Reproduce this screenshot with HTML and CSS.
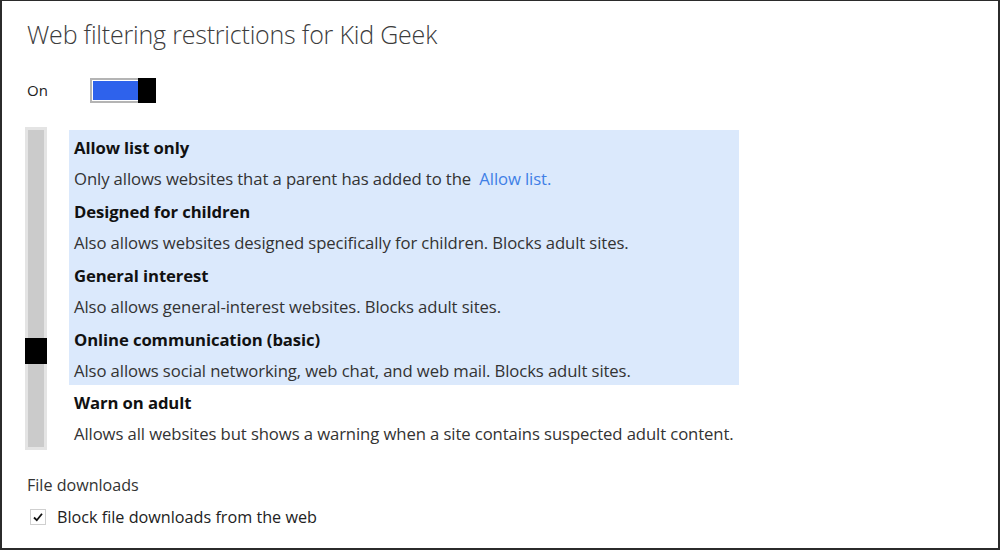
FILE: index.html
```html
<!DOCTYPE html>
<html lang="en">
<head>
	<meta charset="UTF-8">
	<title>Web filtering</title>
	<link rel="stylesheet" href="styles.css">
</head>
<body>
	<div class="frame">
		<h1 class="title">Web filtering restrictions for Kid Geek</h1>
		<div class="onoff">
			<span class="onoff-label">On</span>
			<div class="toggle"><div class="toggle-fill"></div><div class="toggle-thumb"></div></div>
		</div>
		<div class="levels">
			<div class="slider">
				<div class="slider-track"></div>
				<div class="slider-thumb"></div>
			</div>
			<div class="options">
				<div class="selected">
					<div class="opt">
						<div class="opt-name">Allow list only</div>
						<div class="opt-desc">Only allows websites that a parent has added to the <a href="javascript:;" class="link">Allow list.</a></div>
					</div>
					<div class="opt">
						<div class="opt-name">Designed for children</div>
						<div class="opt-desc">Also allows websites designed specifically for children. Blocks adult sites.</div>
					</div>
					<div class="opt">
						<div class="opt-name">General interest</div>
						<div class="opt-desc">Also allows general-interest websites. Blocks adult sites.</div>
					</div>
					<div class="opt">
						<div class="opt-name">Online communication (basic)</div>
						<div class="opt-desc">Also allows social networking, web chat, and web mail. Blocks adult sites.</div>
					</div>
				</div>
				<div class="opt">
					<div class="opt-name">Warn on adult</div>
					<div class="opt-desc">Allows all websites but shows a warning when a site contains suspected adult content.</div>
				</div>
			</div>
		</div>
		<div class="downloads">
			<div class="downloads-title">File downloads</div>
			<label class="check">
				<span class="box">
					<svg width="12" height="12" viewBox="0 0 12 12"><path d="M2 6.5 L4.8 9.2 L10 2.8" fill="none" stroke="#111" stroke-width="1.8"/></svg>
				</span>
				Block file downloads from the web
			</label>
		</div>
	</div>
</body>
</html>
```

FILE: styles.css
```css
html, body {
	margin: 0;
	padding: 0;
}
body {
	width: 1000px;
	height: 550px;
	background: #fff;
	font-family: "Open Sans", "Noto Sans", sans-serif;
	color: #333;
}
.frame {
	box-sizing: border-box;
	width: 1000px;
	height: 550px;
	border: 2px solid #2b2b2b;
	border-top-width: 1px;
	padding: 16px 0 0 25px;
	overflow: hidden;
}
.title {
	margin: 0;
	font-weight: 300;
	font-size: 25px;
	line-height: 34px;
	color: #3c3c3c;
	letter-spacing: -0.2px;
}
.onoff {
	display: flex;
	align-items: center;
	margin-top: 27px;
	height: 24px;
}
.onoff-label {
	font-size: 15px;
	width: 63px;
	color: #222;
}
.toggle {
	display: flex;
	box-sizing: border-box;
	width: 66px;
	height: 25px;
	border: 2px solid #b4b4b4;
	background: #fff;
	padding: 1px 0 1px 1px;
}
.toggle-fill {
	flex: 1;
	background: #2e62ec;
}
.toggle-thumb {
	width: 18px;
	margin: -3px -2px -3px 0;
	background: #000;
}
.levels {
	display: flex;
	margin-top: 25px;
}
.slider {
	position: relative;
	width: 22px;
	height: 323px;
	margin-left: -2px;
	box-sizing: border-box;
	border: 3px solid #e4e4e4;
	background: #cbcbcb;
}
.slider-thumb {
	position: absolute;
	left: -3px;
	right: -3px;
	top: 208px;
	height: 26px;
	background: #000;
}
.options {
	margin-left: 22px;
	margin-top: 3px;
}
.selected {
	width: 670px;
	height: 255px;
	background: #dbe9fc;
}
.opt {
	padding-left: 5px;
	height: 64px;
}
.opt-name {
	font-weight: 700;
	font-size: 16.7px;
	line-height: 20px;
	padding-top: 8px;
	color: #111;
	letter-spacing: -0.1px;
}
.opt-desc {
	font-size: 16.7px;
	line-height: 20px;
	padding-top: 11px;
	color: #333;
	letter-spacing: -0.1px;
}
.link {
	color: #3f7fe6;
	text-decoration: none;
	margin-left: 4px;
}
.downloads {
	margin-top: 25px;
}
.downloads-title {
	font-size: 16.1px;
	line-height: 20px;
	color: #333;
}
.check {
	display: flex;
	align-items: center;
	margin-top: 11px;
	margin-left: 3px;
	font-size: 16.2px;
	color: #222;
}
.box {
	display: flex;
	align-items: center;
	justify-content: center;
	box-sizing: border-box;
	width: 16px;
	height: 16px;
	border: 1px solid #cfcfcf;
	margin-right: 11px;
}
```
